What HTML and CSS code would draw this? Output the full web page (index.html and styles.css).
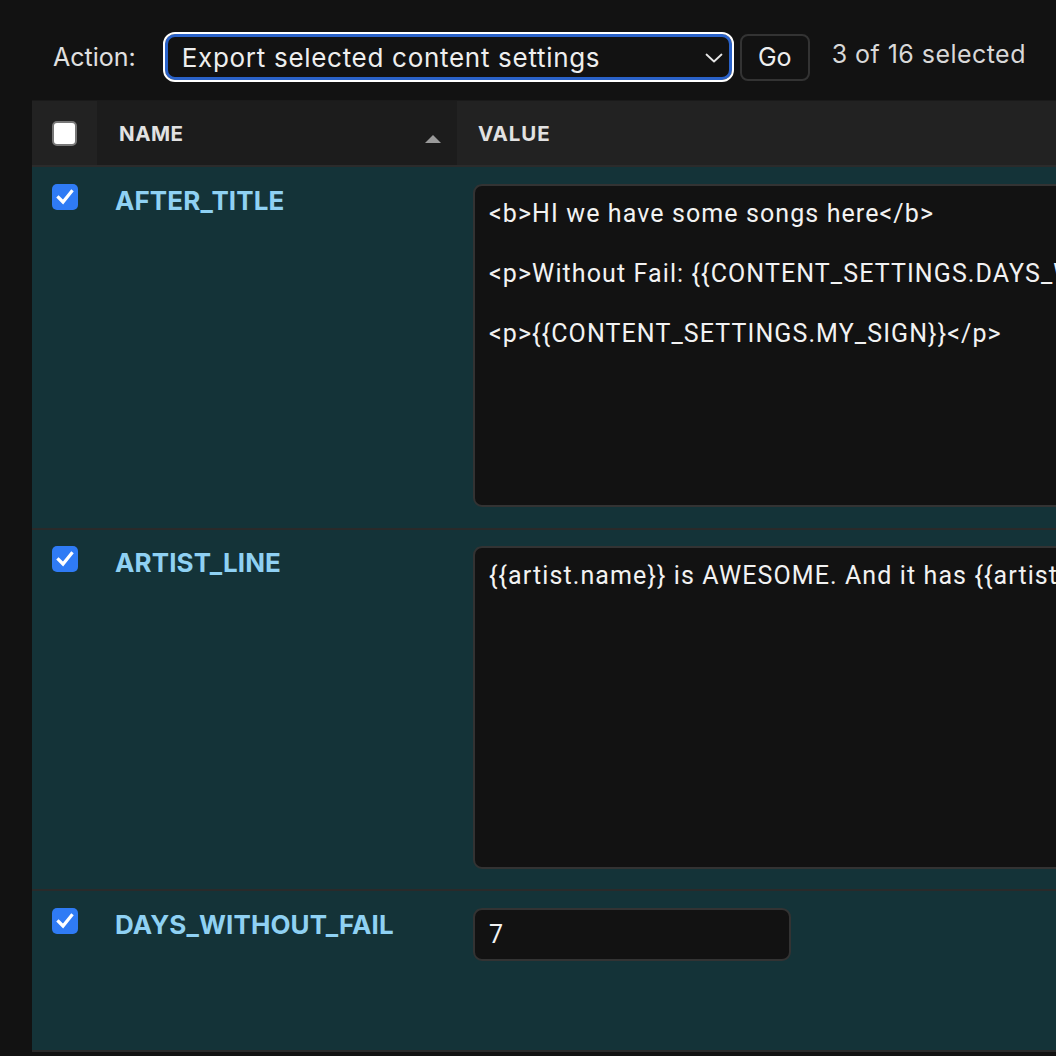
FILE: index.html
```html
<!DOCTYPE html>
<html lang="en">
<head>
<meta charset="utf-8">
<title>Content settings</title>
<link rel="stylesheet" href="styles.css">
</head>
<body>
<div class="page">
  <div class="actions">
    <label class="action-label">Action:</label>
    <span class="select-wrap">
      <select class="action-select">
        <option>Export selected content settings</option>
      </select>
      <svg class="chevron" width="18" height="10" viewBox="0 0 18 10"><path d="M1.5 1.5 L9 8.5 L16.5 1.5" fill="none" stroke="#e6e6e6" stroke-width="1.8" stroke-linecap="round" stroke-linejoin="round"/></svg>
    </span>
    <button class="go">Go</button>
    <span class="counter">3 of 16 selected</span>
  </div>
  <div class="table-wrap">
    <table class="results">
      <colgroup>
        <col class="c-check">
        <col class="c-name">
        <col class="c-value">
      </colgroup>
      <thead>
        <tr>
          <th class="col-check"><span class="cb cb-empty"></span></th>
          <th class="col-name sorted"><span>NAME</span><span class="sort-arrow"></span></th>
          <th class="col-value">VALUE</th>
        </tr>
      </thead>
      <tbody>
        <tr class="row row-1">
          <td class="col-check"><span class="cb cb-on"><svg width="18" height="16" viewBox="0 0 18 16"><path d="M2.5 8.5 L7 13 L15.5 2.5" fill="none" stroke="#fff" stroke-width="3.2" stroke-linecap="square"/></svg></span></td>
          <td class="col-name"><a class="name">AFTER_TITLE</a></td>
          <td class="col-value"><textarea class="area"><b>HI we have some songs here</b>

<p>Without Fail: {{CONTENT_SETTINGS.DAYS_WITHOUT_FAIL}}</p>

<p>{{CONTENT_SETTINGS.MY_SIGN}}</p></textarea></td>
        </tr>
        <tr class="row row-2">
          <td class="col-check"><span class="cb cb-on"><svg width="18" height="16" viewBox="0 0 18 16"><path d="M2.5 8.5 L7 13 L15.5 2.5" fill="none" stroke="#fff" stroke-width="3.2" stroke-linecap="square"/></svg></span></td>
          <td class="col-name"><a class="name">ARTIST_LINE</a></td>
          <td class="col-value"><textarea class="area">{{artist.name}} is AWESOME. And it has {{artist.songs.count}} songs</textarea></td>
        </tr>
        <tr class="row row-3">
          <td class="col-check"><span class="cb cb-on"><svg width="18" height="16" viewBox="0 0 18 16"><path d="M2.5 8.5 L7 13 L15.5 2.5" fill="none" stroke="#fff" stroke-width="3.2" stroke-linecap="square"/></svg></span></td>
          <td class="col-name"><a class="name">DAYS_WITHOUT_FAIL</a></td>
          <td class="col-value"><input class="num" type="text" value="7"></td>
        </tr>
      </tbody>
    </table>
  </div>
</div>
</body>
</html>
```
FILE: styles.css
```css
html, body {
  margin: 0;
  padding: 0;
  background: #121212;
}
body {
  font-family: Inter, "Noto Sans", "Liberation Sans", sans-serif;
  color: #e6e6e6;
  overflow: hidden;
}
.page {
  padding-left: 32px;
  width: 1056px;
  box-sizing: border-box;
  overflow: hidden;
}
.actions {
  display: flex;
  align-items: center;
  height: 100px;
  padding-left: 21px;
  box-sizing: border-box;
  padding-top: 14px;
}
.action-label {
  font-size: 25px;
  color: #e0e0e0;
  margin-right: 27px;
}
.select-wrap {
  position: relative;
  display: inline-block;
  margin: 2px;
}
.action-select {
  appearance: none;
  -webkit-appearance: none;
  width: 567px;
  height: 46px;
  box-sizing: border-box;
  background: #121212;
  color: #eeeeee;
  border: 3px solid #2a62c9;
  outline: 2px solid #ffffff;
  border-radius: 10px;
  font-family: Inter, "Noto Sans", sans-serif;
  font-size: 26px;
  letter-spacing: 0.7px;
  padding: 0 40px 0 14px;
  display: block;
}
.chevron {
  position: absolute;
  right: 9px;
  top: 19px;
}
.go {
  margin-left: 6px;
  width: 70px;
  height: 47px;
  background: #121212;
  border: 2px solid #333333;
  border-radius: 8px;
  color: #eeeeee;
  font-family: Inter, "Noto Sans", sans-serif;
  font-size: 25px;
  padding: 0;
}
.counter {
  margin-left: 22px;
  font-size: 25px;
  letter-spacing: 0.45px;
  color: #d8d8d8;
  margin-top: -6px;
}
.table-wrap {
  border-top: 1px solid #1a1a1a;
  overflow: hidden;
}
.results {
  border-collapse: separate;
  border-spacing: 0;
  width: 1300px;
  table-layout: fixed;
}
.c-check { width: 65px; }
.c-name { width: 360px; }
.c-value { width: 875px; }
.results th {
  height: 66px;
  box-sizing: border-box;
  background: #222222;
  border-bottom: 2px solid #2b2b2b;
  text-align: left;
  font-size: 20.5px;
  font-weight: 700;
  color: #e2e2e2;
  letter-spacing: 0.5px;
  padding: 0;
  vertical-align: middle;
}
.results th.sorted {
  background: #1c1c1c;
}
th.col-check { padding-left: 20px; }
th.col-name {
  padding-left: 22px;
  position: relative;
}
th.col-value { padding-left: 21px; letter-spacing: 0.9px; }
.sort-arrow {
  position: absolute;
  right: 16px;
  top: 34px;
  width: 0;
  height: 0;
  border-left: 8px solid transparent;
  border-right: 8px solid transparent;
  border-bottom: 8px solid #9a9a9a;
}
.cb {
  display: flex;
  align-items: center;
  justify-content: center;
  width: 26px;
  height: 26px;
  box-sizing: border-box;
  border-radius: 5px;
}
.cb-empty {
  background: #ffffff;
  border: 2px solid #777777;
  width: 25px;
  height: 25px;
}
.cb-on {
  background: #2f7bf5;
}
.row td {
  background: #143338;
  vertical-align: top;
  border-bottom: 2px solid #2a2a2a;
  padding-top: 17px;
  padding-bottom: 21px;
}
.row-2 td { padding-top: 16px; padding-bottom: 20px; }
.row-3 td { padding-top: 17px; padding-bottom: 89px; }
.row td.col-check { padding-left: 20px; padding-right: 0; }
.row td.col-name { padding-left: 18px; padding-right: 0; }
.row td.col-value { padding-left: 16px; padding-right: 0; }
.name {
  color: #8fd1f3;
  font-size: 26px;
  font-weight: 700;
  letter-spacing: 0.1px;
  text-decoration: none;
  line-height: 34px;
  display: block;
}
.area {
  display: block;
  width: 860px;
  height: 323px;
  box-sizing: border-box;
  background: #121212;
  color: #f2f2f2;
  border: 2px solid #333333;
  border-radius: 9px;
  font-family: Roboto, "Liberation Sans", sans-serif;
  font-size: 25px;
  letter-spacing: 1.1px;
  line-height: 30px;
  padding: 13px 14px;
  resize: none;
  white-space: pre;
  overflow: hidden;
  margin: 0;
}
.num {
  display: block;
  width: 318px;
  height: 53px;
  box-sizing: border-box;
  background: #121212;
  color: #f2f2f2;
  border: 2px solid #333333;
  border-radius: 9px;
  font-family: Roboto, "Liberation Sans", sans-serif;
  font-size: 25px;
  padding: 0 14px;
  margin: 0;
}
```
